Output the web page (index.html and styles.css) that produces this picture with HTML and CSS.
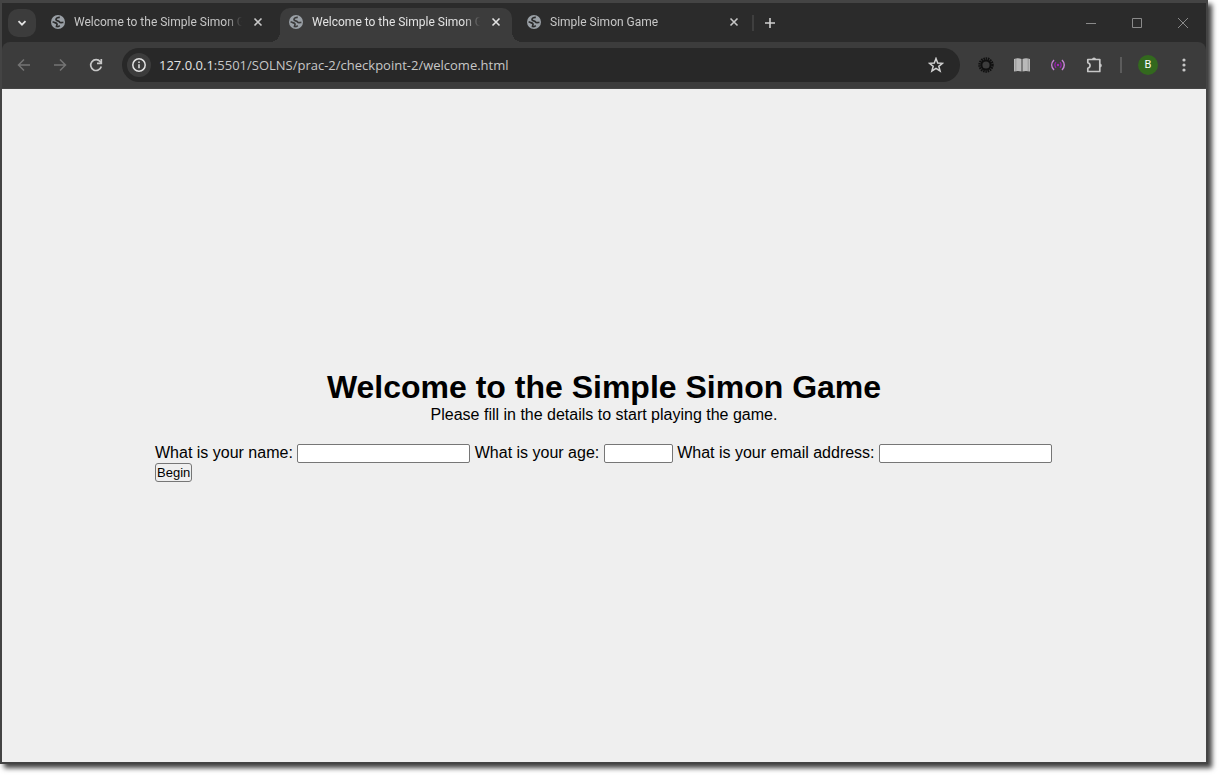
FILE: index.html
```html
<!DOCTYPE html>
<html lang="en">
<head>
<meta charset="utf-8">
<title>Welcome to the Simple Simon Game</title>
<link rel="stylesheet" href="styles.css">
</head>
<body>
<svg class="defs" aria-hidden="true">
  <symbol id="globe" viewBox="0 0 14 14">
    <circle cx="7" cy="7" r="7" fill="#9aa0a6"/>
    <path d="M8.800 2.300C6.500 2.200 5 3.200 5 4.600C5.200 6.200 8.200 5.400 8.600 7.200C9 8 10.500 7.600 12.400 7.400" fill="none" stroke="currentColor" stroke-width="1.700"/>
    <path d="M1.600 6.600C3.400 7.800 5.600 7.600 6 9C6.300 10.200 5.200 10.400 5.400 12.200" fill="none" stroke="currentColor" stroke-width="1.700"/>
    <path d="M5.600 11.700C7 11.700 8 11.400 8.800 10.600" fill="none" stroke="currentColor" stroke-width="1.500"/>
  </symbol>
  <symbol id="cross" viewBox="0 0 16 16">
    <path d="M4.500 4.500L11.500 11.500M11.500 4.500L4.500 11.500" fill="none" stroke="currentColor" stroke-width="1.600"/>
  </symbol>
</svg>
<div class="window">
  <header class="tabstrip">
    <button class="tab-search" aria-label="Search tabs"><svg width="12" height="12" viewBox="0 0 12 12"><path d="M2.500 4.200L6 7.700L9.500 4.200" fill="none" stroke="#e3e3e3" stroke-width="1.800"/></svg></button>
    <div class="tab">
      <svg class="favicon"><use href="#globe"/></svg>
      <span class="tab-title">Welcome to the Simple Simon Game</span>
      <button class="tab-close" aria-label="Close tab"><svg><use href="#cross"/></svg></button>
    </div>
    <div class="tab tab-active">
      <svg class="favicon"><use href="#globe"/></svg>
      <span class="tab-title">Welcome to the Simple Simon Game</span>
      <button class="tab-close" aria-label="Close tab"><svg><use href="#cross"/></svg></button>
    </div>
    <div class="tab">
      <svg class="favicon"><use href="#globe"/></svg>
      <span class="tab-title">Simple Simon Game</span>
      <button class="tab-close" aria-label="Close tab"><svg><use href="#cross"/></svg></button>
    </div>
    <span class="tab-divider"></span>
    <button class="new-tab" aria-label="New tab"><svg width="12" height="12" viewBox="0 0 12 12"><path d="M6 1V11M1 6H11" stroke="#d0d0d0" stroke-width="1.600"/></svg></button>
    <div class="window-controls">
      <button aria-label="Minimize"><svg width="10" height="10" viewBox="0 0 10 10"><path d="M0 5.500H10" stroke="#8a8a8a"/></svg></button>
      <button aria-label="Maximize"><svg width="10" height="10" viewBox="0 0 10 10"><path d="M.5.5H9.500V9.500H.5Z" fill="none" stroke="#8a8a8a"/></svg></button>
      <button aria-label="Close"><svg width="10" height="10" viewBox="0 0 10 10"><path d="M0 0L10 10M10 0L0 10" stroke="#8a8a8a"/></svg></button>
    </div>
  </header>
  <nav class="toolbar">
    <button class="tool" aria-label="Back"><svg width="16" height="16" viewBox="0 0 16 16"><path d="M14 8H3M8 2.500L2.500 8L8 13.500" fill="none" stroke="#747474" stroke-width="1.500"/></svg></button>
    <button class="tool" aria-label="Forward"><svg width="16" height="16" viewBox="0 0 16 16"><path d="M2 8H13M8 2.500L13.500 8L8 13.500" fill="none" stroke="#747474" stroke-width="1.500"/></svg></button>
    <button class="tool" aria-label="Reload"><svg width="16" height="16" viewBox="0 0 16 16"><path d="M13.300 9.500A5.400 5.400 0 1 1 12.300 4.700L13 5.800" fill="none" stroke="#c7c7c7" stroke-width="1.700"/><path d="M13.300 2V6.300H9" fill="none" stroke="#c7c7c7" stroke-width="1.700"/></svg></button>
    <div class="omnibox">
      <button class="site-info" aria-label="View site information"><svg width="14" height="14" viewBox="0 0 14 14"><circle cx="7" cy="7" r="6.200" fill="none" stroke="#e3e3e3" stroke-width="1.500"/><path d="M7 6.200V10.200M7 3.600V5.100" stroke="#e3e3e3" stroke-width="1.500"/></svg></button>
      <span class="url"><span class="host">127.0.0.1</span>:5501/SOLNS/prac-2/checkpoint-2/welcome.html</span>
      <button class="bookmark" aria-label="Bookmark this tab"><svg width="16" height="16" viewBox="0 0 16 16"><path d="M8 1.500L9.700 6L14.500 6.300L10.800 9.300L12.100 14L8 11.400L3.900 14L5.200 9.300L1.500 6.300L6.300 6Z" fill="none" stroke="#d0d0d0" stroke-width="1.500"/></svg></button>
    </div>
    <div class="extensions">
      <button class="tool" aria-label="Dark sun extension"><svg width="16" height="16" viewBox="0 0 16 16"><circle cx="8" cy="8" r="4.600" fill="none" stroke="#101010" stroke-width="2"/><circle cx="8" cy="8" r="6.500" fill="none" stroke="#101010" stroke-width="2.400" stroke-dasharray="1.500 .769"/></svg></button>
      <button class="tool" aria-label="Reader extension"><svg width="16" height="16" viewBox="0 0 16 16"><path d="M0 2C3 .8 5.500 1 7.500 2V14.500C5.500 13.800 3 13.800 0 14.500ZM8.500 2C10.500 1 13 .8 16 2V14.500C13 13.800 10.500 13.800 8.500 14.500Z" fill="#b9b9b9"/><path d="M1.800 2V14M14.200 2V14" stroke="#8e8e8e" stroke-width=".8"/></svg></button>
      <button class="tool" aria-label="Live server extension"><svg width="14" height="12" viewBox="0 0 14 12"><path d="M3 1C0 4 0 8 3 11M11 1C14 4 14 8 11 11" fill="none" stroke="#c583d3" stroke-width="1.500"/><path d="M5 3.200C3.500 5 3.500 7 5 8.800M9 3.200C10.500 5 10.500 7 9 8.800" fill="none" stroke="#9422aa" stroke-width="1.300"/><circle cx="7" cy="6" r="1.200" fill="#a52bbb"/></svg></button>
      <button class="tool" aria-label="Extensions"><svg width="18" height="18" viewBox="0 0 18 18"><path d="M2.800 3.500H14.800V15.500H2.800V12.300C5.800 11.500 5.800 7.500 2.800 6.700Z" fill="none" stroke="#c7c7c7" stroke-width="1.700" stroke-linejoin="round"/><path d="M7 3.500A2 2 0 0 1 11 3.500ZM14.800 7.500A2 2 0 0 1 14.800 11.500Z" fill="#c7c7c7"/></svg></button>
    </div>
    <span class="tool-divider"></span>
    <button class="tool" aria-label="Profile"><span class="avatar">B</span></button>
    <button class="tool" aria-label="Menu"><svg width="4" height="16" viewBox="0 0 4 16" fill="#c7c7c7"><circle cx="2" cy="3" r="1.600"/><circle cx="2" cy="8" r="1.600"/><circle cx="2" cy="13" r="1.600"/></svg></button>
  </nav>
  <main class="page">
    <h1>Welcome to the Simple Simon Game</h1>
    <p>Please fill in the details to start playing the game.</p>
    <form>
      <label for="name">What is your name:</label>
      <input id="name" type="text">
      <label for="age">What is your age:</label>
      <input id="age" class="short" type="number">
      <label for="email">What is your email address:</label>
      <input id="email" type="email">
      <button class="begin" type="button">Begin</button>
    </form>
  </main>
</div>
</body>
</html>
```
FILE: styles.css
```css
* { box-sizing: border-box; margin: 0; padding: 0; }
body {
  display: flex;
  height: 100vh;
  padding: 0 15px 15px 0;
  background: #fff;
  overflow: hidden;
}
button { border: 0; background: none; color: inherit; }
svg { display: block; }
.defs { position: absolute; width: 0; height: 0; }

.window {
  flex: 1;
  display: flex;
  flex-direction: column;
  min-width: 0;
  border: 2px solid #444;
  border-top-width: 3px;
  background: #2b2b2b;
  box-shadow: 4px 4px 5px rgba(0, 0, 0, .75);
}

.tabstrip {
  display: flex;
  align-items: center;
  height: 39px;
  padding-left: 6px;
  color: #c7c7c7;
  font: 12px Roboto, "Open Sans", sans-serif;
}
.tab-search {
  display: grid;
  place-items: center;
  width: 28px;
  height: 28px;
  margin-right: 6px;
  border-radius: 10px;
  background: #3c3c3c;
}
.tab {
  display: flex;
  align-items: center;
  align-self: flex-end;
  flex: 0 1 232px;
  min-width: 0;
  height: 34px;
  margin-right: 6px;
  padding: 0 8px 6px 9px;
}
.favicon { flex: none; width: 14px; height: 14px; margin-right: 9px; color: #2b2b2b; }
.tab-title {
  flex: 1;
  overflow: hidden;
  white-space: nowrap;
  mask-image: linear-gradient(to right, #000 calc(100% - 16px), transparent);
}
.tab-close { flex: none; width: 16px; height: 16px; margin-left: 8px; }
.tab-close svg { width: 16px; height: 16px; }
.tab-active {
  position: relative;
  border-radius: 10px 10px 0 0;
  background: #3c3c3c;
  color: #e3e3e3;
}
.tab-active .favicon { color: #3c3c3c; }
.tab-active::before,
.tab-active::after {
  content: "";
  position: absolute;
  bottom: 0;
  width: 10px;
  height: 10px;
}
.tab-active::before { right: 100%; background: radial-gradient(circle at 0 0, transparent 10px, #3c3c3c 10px); }
.tab-active::after { left: 100%; background: radial-gradient(circle at 100% 0, transparent 10px, #3c3c3c 10px); }
.tab-divider { width: 2px; height: 16px; margin-right: 4px; margin-left: -4px; background: #3f3f3f; }
.new-tab { display: grid; place-items: center; width: 24px; height: 28px; }
.window-controls { display: flex; margin-left: auto; }
.window-controls button { display: grid; place-items: center; width: 46px; height: 38px; }

.toolbar {
  display: flex;
  align-items: center;
  height: 47px;
  padding: 0 4px;
  border-bottom: 1px solid #454545;
  border-radius: 8px 8px 0 0;
  background: #3c3c3c;
}
.tool { display: grid; place-items: center; flex: none; width: 36px; height: 36px; }
.omnibox {
  flex: 1;
  display: flex;
  align-items: center;
  min-width: 0;
  height: 34px;
  margin: 0 8px;
  padding: 0 12px 0 5px;
  border-radius: 17px;
  background: #282828;
  color: #c7c7c7;
  font: 13px "Open Sans", "Noto Sans", sans-serif;
}
.site-info {
  display: grid;
  place-items: center;
  flex: none;
  width: 24px;
  height: 24px;
  margin-right: 8px;
  border-radius: 50%;
  background: #3c3c3c;
}
.url { flex: 1; overflow: hidden; white-space: nowrap; }
.host { color: #e3e3e3; }
.bookmark { width: 24px; height: 24px; display: grid; place-items: center; }
.extensions { display: flex; }
.tool-divider { width: 2px; height: 16px; margin: 0 8px; background: #5c5c5c; }
.avatar {
  width: 20px;
  height: 20px;
  border-radius: 50%;
  background: #33691e;
  color: #fff;
  font: 11px/20px Roboto, sans-serif;
  text-align: center;
}

.page {
  flex: 1;
  display: flex;
  flex-direction: column;
  align-items: center;
  justify-content: center;
  background: #efefef;
  color: #000;
  font: 16px/18px "Liberation Sans", Arial, sans-serif;
}
.page h1 { font-size: 32px; line-height: 37px; }
.page form { max-width: 898px; margin-top: 20px; }
.page input {
  width: 173px;
  height: 19px;
  border: 1px solid #767676;
  border-radius: 2px;
  background: #fff;
  vertical-align: top;
}
.page .short { width: 69px; }
.begin {
  height: 19px;
  padding: 0 1px;
  border: 1px solid #767676;
  border-radius: 3px;
  background: #efefef;
  font: 13px "Liberation Sans", Arial, sans-serif;
  vertical-align: top;
}
```
